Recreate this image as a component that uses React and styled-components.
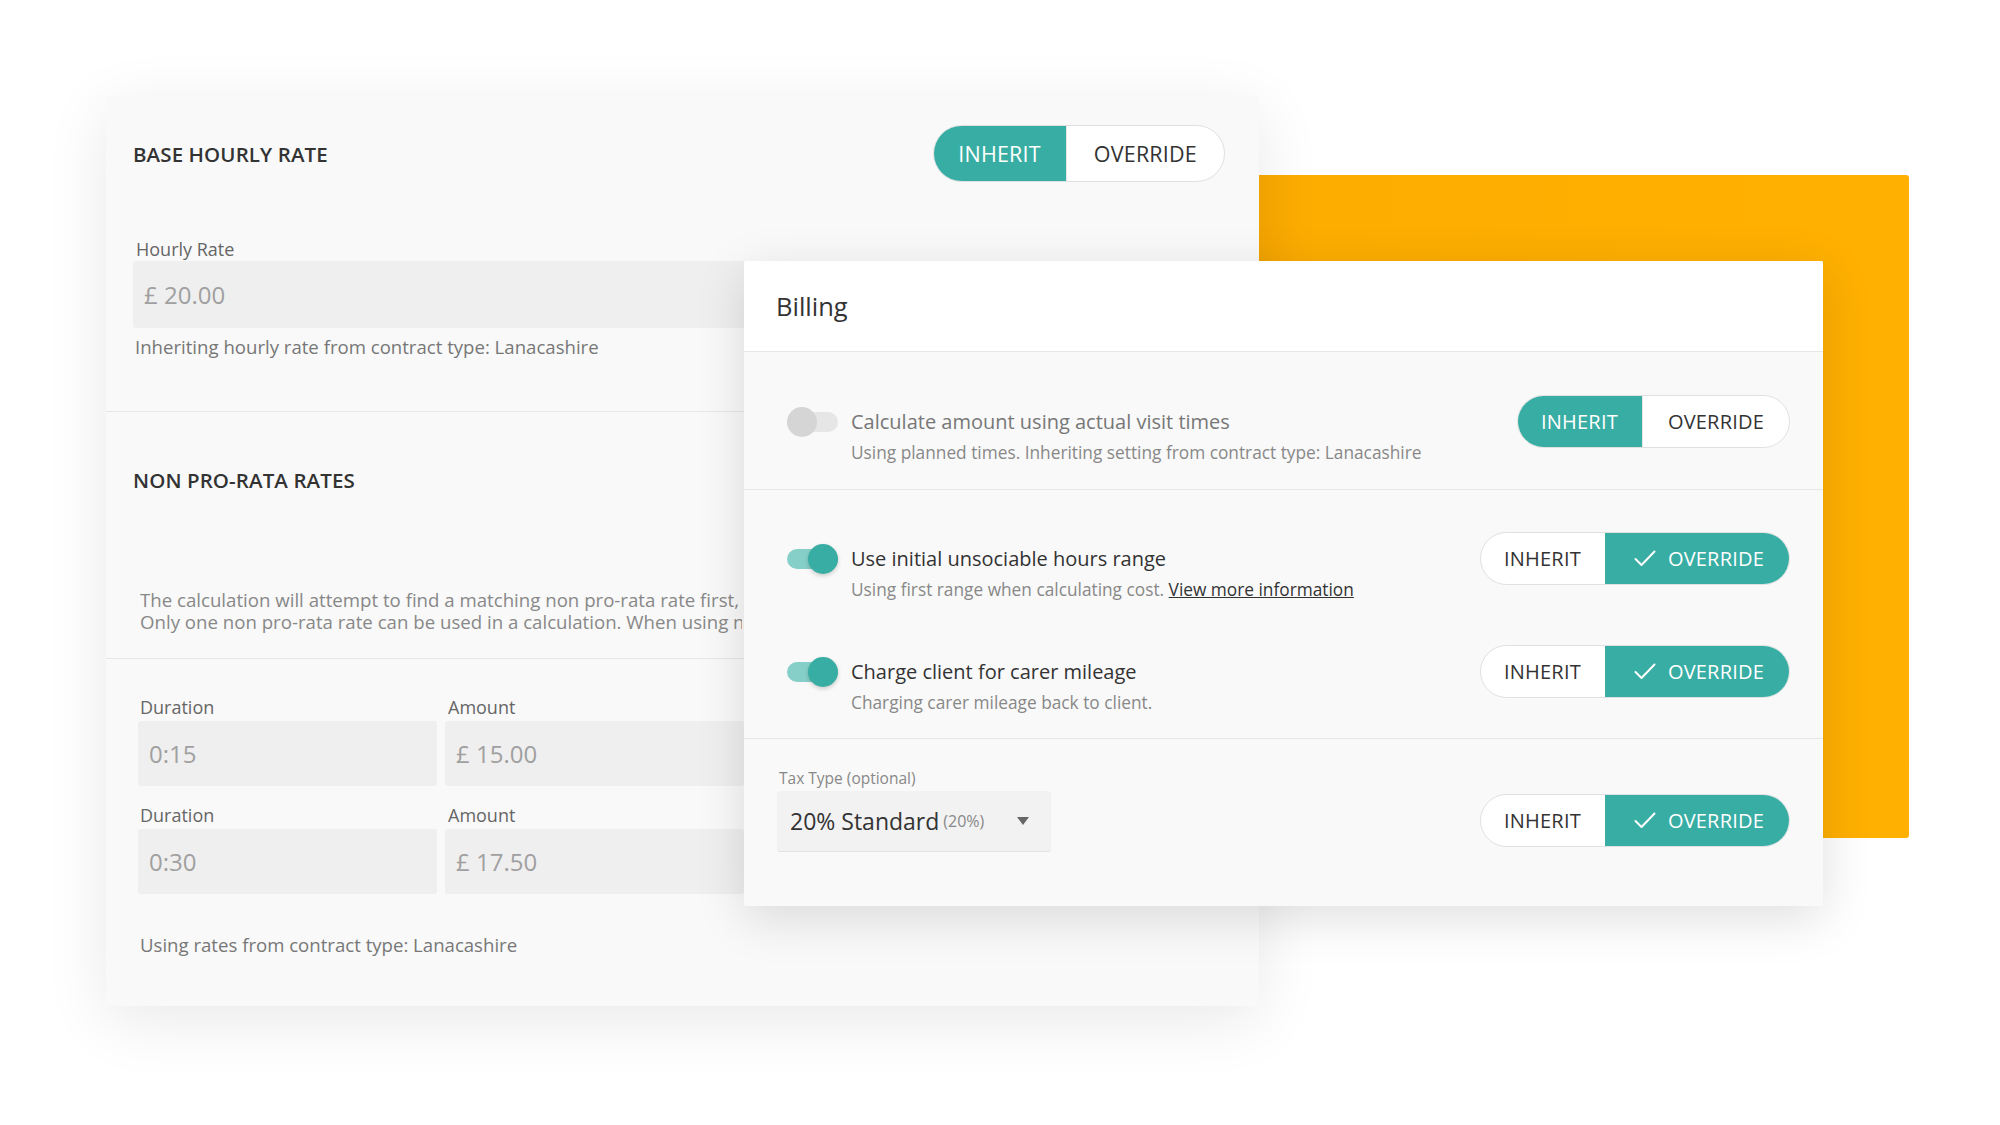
import React from "react";
import styled, { createGlobalStyle } from "styled-components";

const GlobalStyle = createGlobalStyle`
  html, body {
    margin: 0;
    padding: 0;
    background: #ffffff;
  }
  body {
    font-family: "Open Sans", "Liberation Sans", sans-serif;
    color: #333;
  }
`;

const TEAL = "#38ada3";

const Stage = styled.div`
  position: relative;
  width: 2000px;
  height: 1125px;
  overflow: hidden;
  background: #fff;
`;

// Orange block sitting behind both cards
const Accent = styled.div`
  position: absolute;
  left: 1150px;
  top: 175px;
  width: 759px;
  height: 663px;
  border-radius: 3px;
  background: linear-gradient(90deg, #f2a100 0%, #fdad00 20%, #ffb000 100%);
  z-index: 0;
`;

// ---------- back card ----------
const BackCard = styled.div`
  position: relative;
  z-index: 1;
  margin: 96px 0 0 106px;
  width: 1153px;
  height: 910px;
  background: #f9f9f9;
  box-shadow: 0 14px 60px rgba(0, 0, 0, 0.09);
  display: flex;
  flex-direction: column;
`;

const Section = styled.div`
  padding: ${(p) => p.$pad};
  border-bottom: ${(p) => (p.$last ? "none" : "1px solid #e6e6e6")};
  height: ${(p) => p.$h}px;
  box-sizing: border-box;
  flex-shrink: 0;
`;

const HeadRow = styled.div`
  display: flex;
  align-items: center;
  justify-content: space-between;
  height: 57px;
`;

const Heading = styled.h3`
  margin: 0;
  font-size: 20.5px;
  font-weight: 600;
  line-height: 28px;
  color: #333;
  letter-spacing: 0.1px;
`;

const FieldLabel = styled.div`
  font-size: 18px;
  line-height: 24px;
  color: #666;
  padding-left: ${(p) => p.$indent || 3}px;
  margin-top: ${(p) => p.$mt || 0}px;
`;

const InputBox = styled.div`
  height: ${(p) => p.$h || 67}px;
  margin-top: ${(p) => p.$mt || 0}px;
  background: #efefef;
  border-radius: 3px;
  display: flex;
  align-items: center;
  padding-left: 11px;
  font-size: 24px;
  color: #a0a0a0;
  box-sizing: border-box;
`;

const Helper = styled.div`
  margin-top: ${(p) => p.$mt}px;
  font-size: 18.6px;
  line-height: 24px;
  color: #777;
  padding-left: ${(p) => p.$indent || 2}px;
`;

// clipped where the billing card starts
const Paragraph = styled.p`
  margin: 95px 0 0 7px;
  width: 602px;
  overflow: hidden;
  font-size: 18.65px;
  line-height: 22px;
  color: #888;
  white-space: nowrap;
`;

const RateGrid = styled.div`
  display: grid;
  grid-template-columns: 299px 299px;
  column-gap: 8px;
  margin-left: 5px;
`;

const RateCell = styled.div`
  display: flex;
  flex-direction: column;
  margin-top: ${(p) => p.$mt}px;
`;

// ---------- button group ----------
const Segmented = styled.div`
  display: inline-flex;
  height: ${(p) => p.$h}px;
  border: 1px solid #e0e0e0;
  border-radius: 40px;
  overflow: hidden;
  background: #fff;
  box-sizing: border-box;
  flex-shrink: 0;
`;

const Seg = styled.div`
  display: flex;
  align-items: center;
  gap: 12px;
  padding: 0 ${(p) => p.$pr}px 0 ${(p) => p.$pl}px;
  font-size: ${(p) => p.$fs}px;
  letter-spacing: 0.2px;
  color: ${(p) => (p.$active ? "#fff" : "#333")};
  background: ${(p) => (p.$active ? TEAL : "transparent")};
  border-left: ${(p) => (p.$divider ? "1px solid #e6e6e6" : "none")};
`;

const Check = () => (
  <svg width="22" height="17" viewBox="0 0 22 17" fill="none">
    <polyline
      points="1.5,9 7.5,15 20.5,1.5"
      stroke="#fff"
      strokeWidth="2"
      strokeLinecap="round"
      strokeLinejoin="round"
    />
  </svg>
);

const Choice = ({ override, h = 53, fs = 20, big }) => (
  <Segmented $h={h}>
    <Seg $active={!override} $fs={fs} $pl={big ? 24 : 23} $pr={big ? 25 : 24}>
      INHERIT
    </Seg>
    {override ? (
      <Seg $active $fs={fs} $pl={29} $pr={25}>
        <Check />
        OVERRIDE
      </Seg>
    ) : (
      <Seg $divider $fs={fs} $pl={big ? 27 : 25} $pr={big ? 27 : 25}>
        OVERRIDE
      </Seg>
    )}
  </Segmented>
);

// ---------- front card ----------
const FrontCard = styled.div`
  position: absolute;
  z-index: 2;
  left: 744px;
  top: 261px;
  width: 1079px;
  height: 645px;
  background: #f9f9f9;
  border-radius: 2px;
  box-shadow: 0 12px 50px rgba(0, 0, 0, 0.13);
  display: flex;
  flex-direction: column;
  overflow: hidden;
`;

const CardHeader = styled.div`
  height: 91px;
  flex-shrink: 0;
  box-sizing: border-box;
  background: #fff;
  border-bottom: 1px solid #e8e8e8;
  display: flex;
  align-items: center;
  padding-left: 32px;
  font-size: 25.5px;
  color: #333;
`;

const Block = styled.div`
  box-sizing: border-box;
  height: ${(p) => p.$h}px;
  flex-shrink: 0;
  padding: ${(p) => p.$pt}px 33px 0 43px;
  border-bottom: ${(p) => (p.$last ? "none" : "1px solid #e6e6e6")};
`;

const Setting = styled.div`
  margin-top: ${(p) => p.$mt || 0}px;
`;

const SettingLine = styled.div`
  display: flex;
  align-items: center;
  height: 53px;
`;

const Toggle = styled.div`
  position: relative;
  width: 51px;
  height: 20px;
  border-radius: 10px;
  flex-shrink: 0;
  background: ${(p) => (p.$on ? "#86cfc8" : "#e6e6e6")};

  &::after {
    content: "";
    position: absolute;
    top: -5px;
    ${(p) => (p.$on ? "right: 0;" : "left: 0;")}
    width: 30px;
    height: 30px;
    border-radius: 50%;
    background: ${(p) => (p.$on ? TEAL : "#d5d5d5")};
    box-shadow: ${(p) => (p.$on ? "0 2px 4px rgba(0,0,0,0.18)" : "none")};
  }
`;

const SettingLabel = styled.div`
  margin-left: 13px;
  font-size: 20px;
  color: ${(p) => (p.$muted ? "#777" : "#333")};
  flex: 1;
`;

const SettingSub = styled.div`
  margin: -7px 0 0 64px;
  font-size: 17.3px;
  line-height: 24px;
  color: #888;

  a {
    color: #333;
    text-decoration: underline;
  }
`;

const TaxRow = styled.div`
  display: flex;
  align-items: flex-end;
  justify-content: space-between;
  margin-left: -10px;
`;

const TaxField = styled.div`
  display: flex;
  flex-direction: column;
`;

const TaxLabel = styled.div`
  font-size: 15.5px;
  line-height: 20px;
  color: #888;
  padding-left: 2px;
  margin-bottom: 3px;
`;

const Select = styled.div`
  width: 274px;
  height: 60px;
  box-sizing: border-box;
  background: #f2f2f2;
  border-radius: 3px;
  box-shadow: 0 1px 0 #e2e2e2;
  display: flex;
  align-items: center;
  padding: 0 13px;
  font-size: 23px;
  color: #333;
`;

const SelectHint = styled.span`
  font-size: 16px;
  color: #888;
  margin-left: 4px;
  flex: 1;
`;

const Caret = styled.span`
  width: 0;
  height: 0;
  border-left: 6px solid transparent;
  border-right: 6px solid transparent;
  border-top: 8px solid #666;
  margin-right: 9px;
`;

const TaxButtons = styled.div`
  margin-bottom: 4px;
`;

export default function App() {
  return (
    <>
      <GlobalStyle />
      <Stage>
        <Accent />

        <BackCard>
          <Section $h={316} $pad="29px 34px 0 27px">
            <HeadRow>
              <Heading>BASE HOURLY RATE</Heading>
              <Choice h={57} fs={21.5} big />
            </HeadRow>
            <FieldLabel $mt={55}>Hourly Rate</FieldLabel>
            <InputBox>£ 20.00</InputBox>
            <Helper $mt={7}>Inheriting hourly rate from contract type: Lanacashire</Helper>
          </Section>

          <Section $h={247} $pad="54px 35px 0 27px">
            <Heading>NON PRO-RATA RATES</Heading>
            <Paragraph>
              The calculation will attempt to find a matching non pro-rata rate first, then fall back to the base hourly rate.
              <br />
              Only one non pro-rata rate can be used in a calculation. When using non pro-rata rates the visit duration is rounded.
            </Paragraph>
          </Section>

          <Section $last $h={347} $pad="36px 35px 0 27px">
            <RateGrid>
              <RateCell>
                <FieldLabel $indent={2}>Duration</FieldLabel>
                <InputBox $h={65} $mt={2}>0:15</InputBox>
              </RateCell>
              <RateCell>
                <FieldLabel $indent={3}>Amount</FieldLabel>
                <InputBox $h={65} $mt={2}>£ 15.00</InputBox>
              </RateCell>
              <RateCell $mt={17}>
                <FieldLabel $indent={2}>Duration</FieldLabel>
                <InputBox $h={65} $mt={2}>0:30</InputBox>
              </RateCell>
              <RateCell $mt={17}>
                <FieldLabel $indent={3}>Amount</FieldLabel>
                <InputBox $h={65} $mt={2}>£ 17.50</InputBox>
              </RateCell>
            </RateGrid>
            <Helper $mt={39} $indent={7}>Using rates from contract type: Lanacashire</Helper>
          </Section>
        </BackCard>

        <FrontCard>
          <CardHeader>Billing</CardHeader>

          <Block $h={138} $pt={43}>
            <Setting>
              <SettingLine>
                <Toggle />
                <SettingLabel $muted>Calculate amount using actual visit times</SettingLabel>
                <Choice />
              </SettingLine>
              <SettingSub>Using planned times. Inheriting setting from contract type: Lanacashire</SettingSub>
            </Setting>
          </Block>

          <Block $h={249} $pt={42}>
            <Setting>
              <SettingLine>
                <Toggle $on />
                <SettingLabel>Use initial unsociable hours range</SettingLabel>
                <Choice override />
              </SettingLine>
              <SettingSub>
                Using first range when calculating cost. <a>View more information</a>
              </SettingSub>
            </Setting>
            <Setting $mt={43}>
              <SettingLine>
                <Toggle $on />
                <SettingLabel>Charge client for carer mileage</SettingLabel>
                <Choice override />
              </SettingLine>
              <SettingSub>Charging carer mileage back to client.</SettingSub>
            </Setting>
          </Block>

          <Block $last $h={167} $pt={29}>
            <TaxRow>
              <TaxField>
                <TaxLabel>Tax Type (optional)</TaxLabel>
                <Select>
                  20% Standard
                  <SelectHint>(20%)</SelectHint>
                  <Caret />
                </Select>
              </TaxField>
              <TaxButtons>
                <Choice override />
              </TaxButtons>
            </TaxRow>
          </Block>
        </FrontCard>
      </Stage>
    </>
  );
}
